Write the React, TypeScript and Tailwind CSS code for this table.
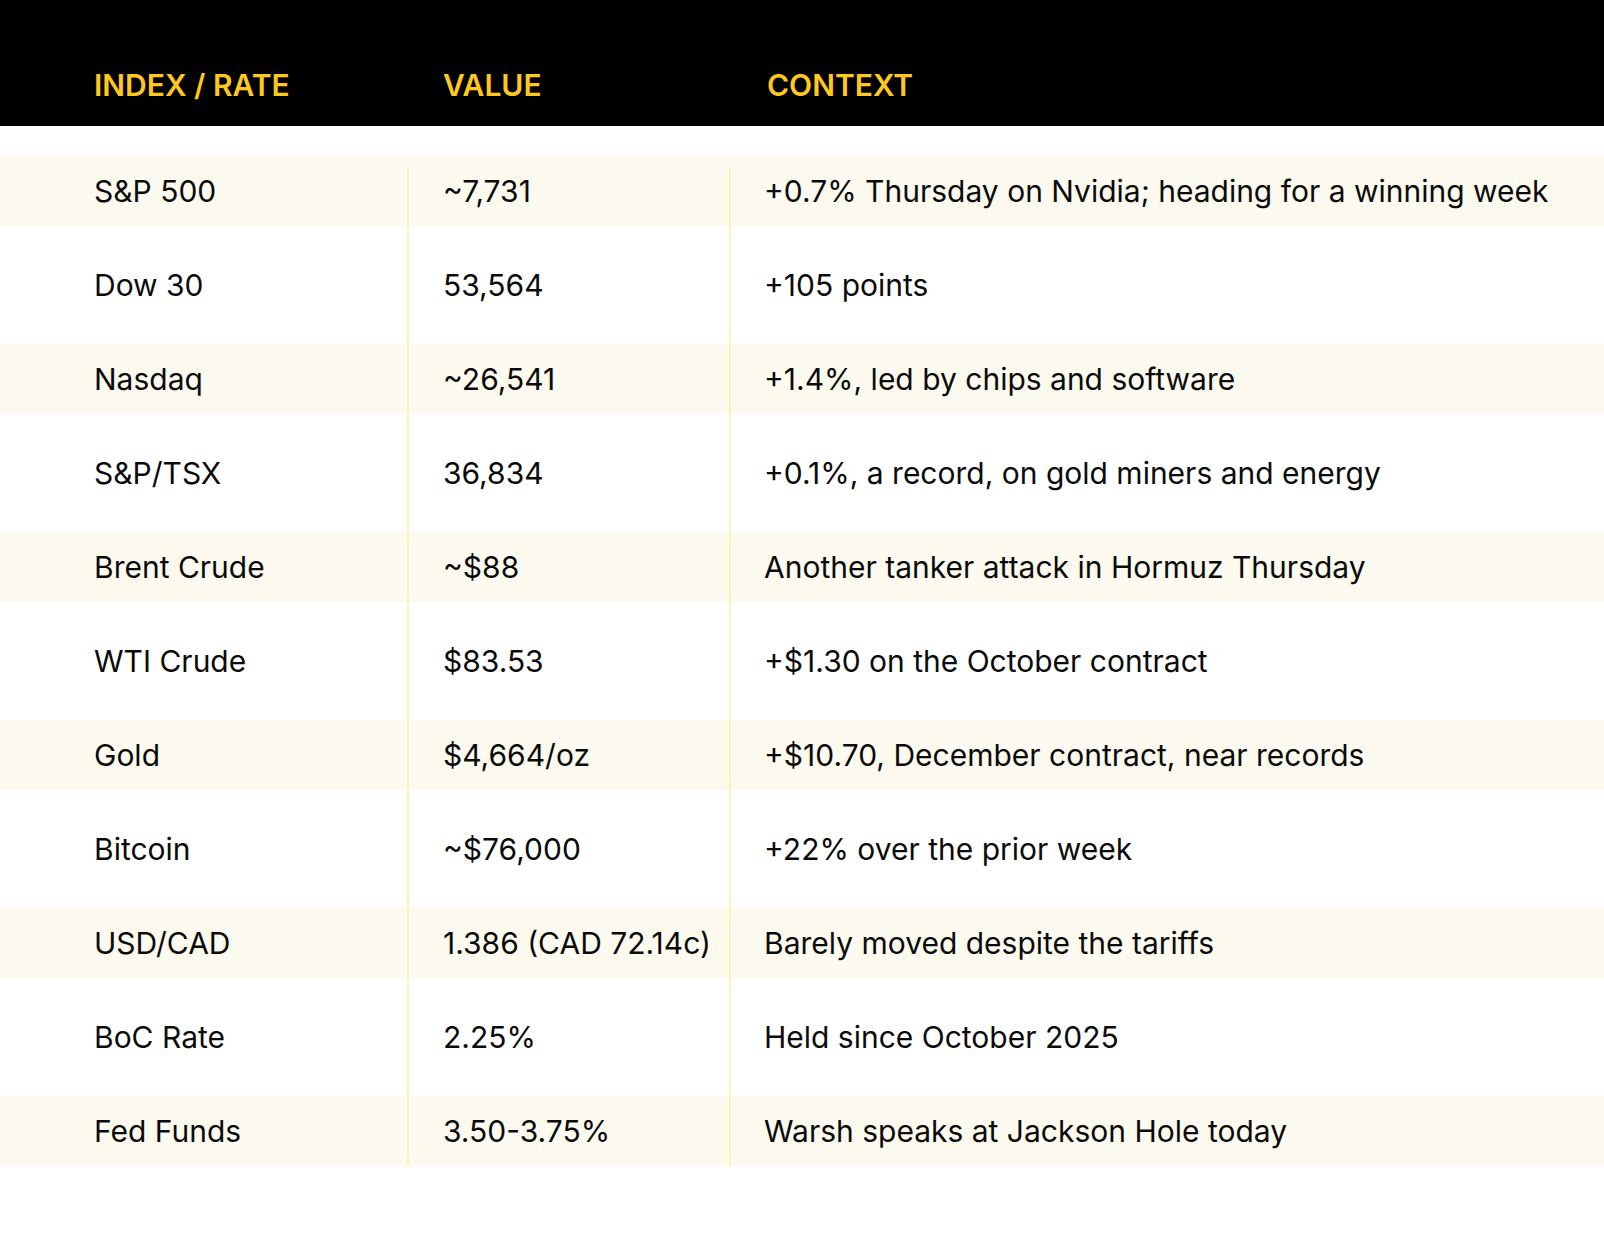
const rows: [string, string, string][] = [
  ['S&P 500', '~7,731', '+0.7% Thursday on Nvidia; heading for a winning week'],
  ['Dow 30', '53,564', '+105 points'],
  ['Nasdaq', '~26,541', '+1.4%, led by chips and software'],
  ['S&P/TSX', '36,834', '+0.1%, a record, on gold miners and energy'],
  ['Brent Crude', '~$88', 'Another tanker attack in Hormuz Thursday'],
  ['WTI Crude', '$83.53', '+$1.30 on the October contract'],
  ['Gold', '$4,664/oz', '+$10.70, December contract, near records'],
  ['Bitcoin', '~$76,000', '+22% over the prior week'],
  ['USD/CAD', '1.386 (CAD 72.14c)', 'Barely moved despite the tariffs'],
  ['BoC Rate', '2.25%', 'Held since October 2025'],
  ['Fed Funds', '3.50-3.75%', 'Warsh speaks at Jackson Hole today'],
];

export default function App() {
  return (
    <div className="min-h-[1244px] w-[1604px] bg-white font-['Inter','Liberation_Sans',sans-serif] text-[30px] text-[#0b0b0b]">
      {/* Header */}
      <div className="grid h-[126px] grid-cols-[408px_322px_1fr] bg-black pt-[68px] font-semibold leading-[34px] text-[#ffc81e]">
        <div className="pl-[94px]">INDEX / RATE</div>
        <div className="pl-[35px]">VALUE</div>
        <div className="pl-[37px]">CONTEXT</div>
      </div>

      {/* Body */}
      <div className="relative mt-[30px] flex flex-col gap-6">
        {rows.map(([name, value, context], i) => (
          <div
            key={name}
            className={`grid h-[70px] grid-cols-[408px_322px_1fr] items-center whitespace-nowrap ${
              i % 2 === 0 ? 'bg-[#fcfaee]' : 'bg-white'
            }`}
          >
            <div className="pl-[94px]">{name}</div>
            <div className="pl-[35px]">{value}</div>
            <div className="pl-[34px]">{context}</div>
          </div>
        ))}
        {/* column rules */}
        <div className="absolute bottom-0 left-[407px] top-3 w-[2px] bg-[#fdf1bd]" />
        <div className="absolute bottom-0 left-[729px] top-3 w-[2px] bg-[#fdf1bd]" />
      </div>
    </div>
  );
}
